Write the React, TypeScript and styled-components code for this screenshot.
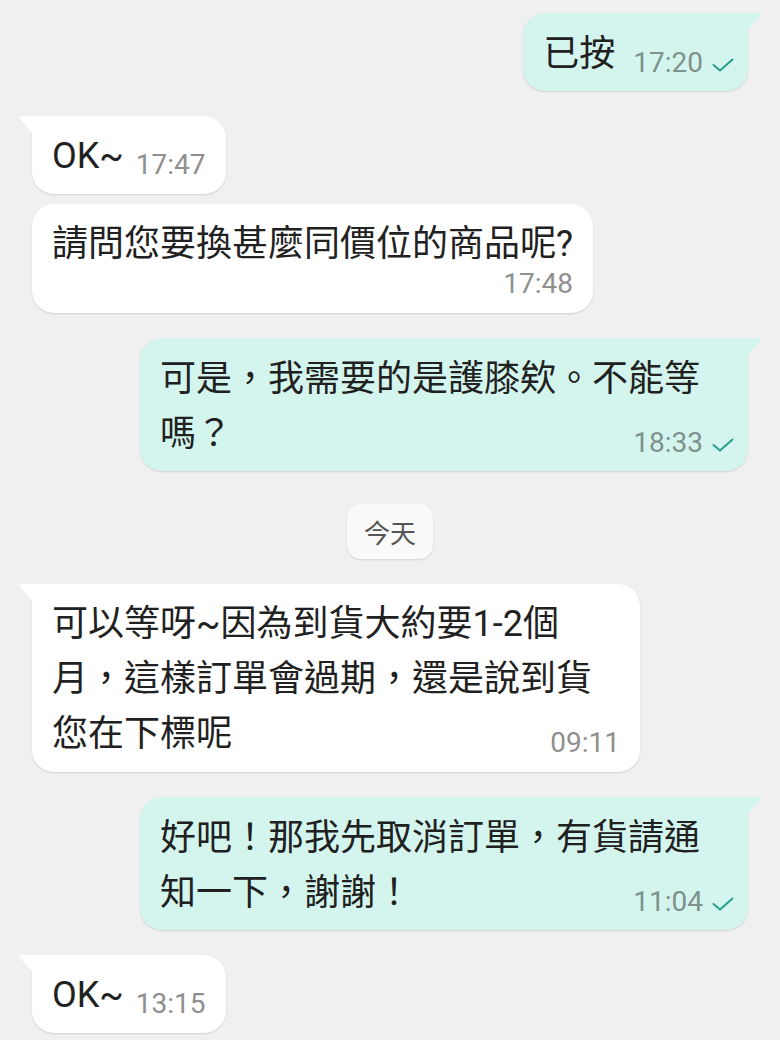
import styled, { createGlobalStyle } from "styled-components";

const GlobalStyle = createGlobalStyle`
  body {
    margin: 0;
    background: #f0f0f0;
    font-family: Roboto, "Noto Sans CJK TC", sans-serif;
  }
`;

type Message =
  | { kind: "msg"; out: boolean; text: string; time: string; tail?: boolean; stacked?: boolean; gap: number }
  | { kind: "date"; label: string; gap: number };

const messages: Message[] = [
  { kind: "msg", out: true, text: "已按", time: "17:20", tail: true, gap: 0 },
  { kind: "msg", out: false, text: "OK~", time: "17:47", tail: true, gap: 25 },
  { kind: "msg", out: false, text: "請問您要換甚麼同價位的商品呢?", time: "17:48", stacked: true, gap: 10 },
  { kind: "msg", out: true, text: "可是，我需要的是護膝欸。不能等嗎？", time: "18:33", tail: true, gap: 25 },
  { kind: "date", label: "今天", gap: 33 },
  {
    kind: "msg",
    out: false,
    text: "可以等呀~因為到貨大約要1-2個月，這樣訂單會過期，還是說到貨您在下標呢",
    time: "09:11",
    tail: true,
    gap: 25,
  },
  { kind: "msg", out: true, text: "好吧！那我先取消訂單，有貨請通知一下，謝謝！", time: "11:04", tail: true, gap: 25 },
  { kind: "msg", out: false, text: "OK~", time: "13:15", tail: true, gap: 25 },
];

const Thread = styled.div`
  display: flex;
  flex-direction: column;
  padding: 13px 32px;
`;

const Row = styled.div<{ $out?: boolean; $gap: number }>`
  display: flex;
  justify-content: ${(p) => (p.$out ? "flex-end" : "flex-start")};
  margin-top: ${(p) => p.$gap}px;
`;

const DateRow = styled.div<{ $gap: number }>`
  display: flex;
  justify-content: center;
  margin-top: ${(p) => p.$gap}px;
`;

const DateChip = styled.div`
  height: 55px;
  line-height: 55px;
  padding: 0 17px;
  border-radius: 14px;
  background: #fafafa;
  color: #555;
  font-family: "Noto Sans CJK TC", sans-serif;
  font-size: 26px;
  box-shadow: 0 1px 2px rgba(0, 0, 0, 0.12);
`;

const Bubble = styled.div<{ $out?: boolean; $tail?: boolean }>`
  position: relative;
  display: flow-root;
  max-width: 608px;
  box-sizing: border-box;
  padding: ${(p) => (p.$out ? "14px 14px 9px 20px" : "13px 20px 10px")};
  background: ${(p) => (p.$out ? "#d4f5ee" : "#ffffff")};
  border-radius: 22px;
  ${(p) => p.$tail && (p.$out ? "border-top-right-radius: 0;" : "border-top-left-radius: 0;")}
  box-shadow: 0 1px 2px rgba(0, 0, 0, 0.13);
  color: #212121;
  font-size: 36px;
  line-height: 55px;

  &::before {
    content: "";
    display: ${(p) => (p.$tail ? "block" : "none")};
    position: absolute;
    top: 0;
    width: 14px;
    height: 18px;
    background: inherit;
    ${(p) =>
      p.$out
        ? "right: -13px; clip-path: polygon(0 0, 88% 0, 100% 8%, 0 100%);"
        : "left: -13px; clip-path: polygon(0 8%, 12% 0, 100% 0, 100% 100%);"}
  }
`;

const Time = styled.span<{ $out?: boolean; $stacked?: boolean }>`
  display: ${(p) => (p.$stacked ? "block" : "inline-flex")};
  float: ${(p) => (p.$stacked ? "none" : "right")};
  align-items: baseline;
  justify-content: flex-end;
  margin: ${(p) => (p.$stacked ? "0 0 7px 0" : p.$out ? "22px 0 0 18px" : "22px 0 0 12px")};
  font-family: Roboto, sans-serif;
  font-size: 28px;
  line-height: ${(p) => (p.$stacked ? "24px" : "28px")};
  text-align: right;
  color: ${(p) => (p.$out ? "#7e918d" : "#8f8f8f")};
`;

const Check = styled.svg`
  margin-left: 9px;
  width: 22px;
  height: 14px;
  color: #26a08a;
`;

const Tick = () => (
  <Check viewBox="0 0 22 14" fill="none">
    <polyline points="1.5,7 8,12.5 20.5,1.5" stroke="currentColor" strokeWidth="2" strokeLinecap="round" strokeLinejoin="round" />
  </Check>
);

export default function App() {
  return (
    <>
      <GlobalStyle />
      <Thread>
        {messages.map((m, i) =>
          m.kind === "date" ? (
            <DateRow key={i} $gap={m.gap}>
              <DateChip>{m.label}</DateChip>
            </DateRow>
          ) : (
            <Row key={i} $out={m.out} $gap={m.gap}>
              <Bubble $out={m.out} $tail={m.tail}>
                {m.text}
                <Time $out={m.out} $stacked={m.stacked}>
                  {m.time}
                  {m.out && <Tick />}
                </Time>
              </Bubble>
            </Row>
          )
        )}
      </Thread>
    </>
  );
}
